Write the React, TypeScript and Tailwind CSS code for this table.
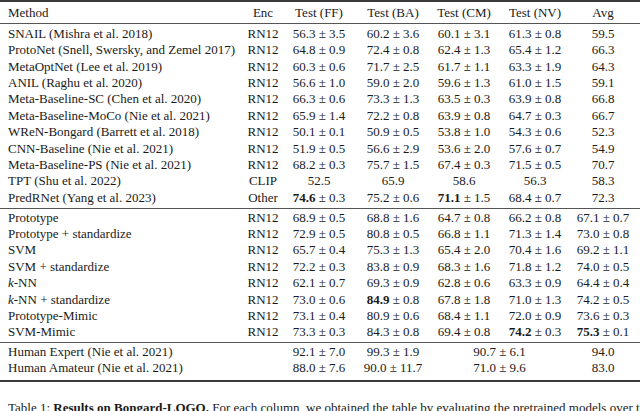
import React from "react";

type Cell = { v: string; e?: string; b?: boolean };

interface Row {
  method: React.ReactNode;
  enc: string;
  cells: Cell[];
  human?: boolean;
}

const c = (s: string, b = false): Cell => {
  const [v, e] = s.split("|");
  return { v, e, b };
};

const kNN = (
  <>
    <span className="italic">k</span>-NN
  </>
);

const baselines: Row[] = [
  { method: "SNAIL (Mishra et al. 2018)", enc: "RN12", cells: [c("56.3|3.5"), c("60.2|3.6"), c("60.1|3.1"), c("61.3|0.8"), c("59.5")] },
  { method: "ProtoNet (Snell, Swersky, and Zemel 2017)", enc: "RN12", cells: [c("64.8|0.9"), c("72.4|0.8"), c("62.4|1.3"), c("65.4|1.2"), c("66.3")] },
  { method: "MetaOptNet (Lee et al. 2019)", enc: "RN12", cells: [c("60.3|0.6"), c("71.7|2.5"), c("61.7|1.1"), c("63.3|1.9"), c("64.3")] },
  { method: "ANIL (Raghu et al. 2020)", enc: "RN12", cells: [c("56.6|1.0"), c("59.0|2.0"), c("59.6|1.3"), c("61.0|1.5"), c("59.1")] },
  { method: "Meta-Baseline-SC (Chen et al. 2020)", enc: "RN12", cells: [c("66.3|0.6"), c("73.3|1.3"), c("63.5|0.3"), c("63.9|0.8"), c("66.8")] },
  { method: "Meta-Baseline-MoCo (Nie et al. 2021)", enc: "RN12", cells: [c("65.9|1.4"), c("72.2|0.8"), c("63.9|0.8"), c("64.7|0.3"), c("66.7")] },
  { method: "WReN-Bongard (Barrett et al. 2018)", enc: "RN12", cells: [c("50.1|0.1"), c("50.9|0.5"), c("53.8|1.0"), c("54.3|0.6"), c("52.3")] },
  { method: "CNN-Baseline (Nie et al. 2021)", enc: "RN12", cells: [c("51.9|0.5"), c("56.6|2.9"), c("53.6|2.0"), c("57.6|0.7"), c("54.9")] },
  { method: "Meta-Baseline-PS (Nie et al. 2021)", enc: "RN12", cells: [c("68.2|0.3"), c("75.7|1.5"), c("67.4|0.3"), c("71.5|0.5"), c("70.7")] },
  { method: "TPT (Shu et al. 2022)", enc: "CLIP", cells: [c("52.5"), c("65.9"), c("58.6"), c("56.3"), c("58.3")] },
  { method: "PredRNet (Yang et al. 2023)", enc: "Other", cells: [c("74.6|0.3", true), c("75.2|0.6"), c("71.1|1.5", true), c("68.4|0.7"), c("72.3")] },
];

const ours: Row[] = [
  { method: "Prototype", enc: "RN12", cells: [c("68.9|0.5"), c("68.8|1.6"), c("64.7|0.8"), c("66.2|0.8"), c("67.1|0.7")] },
  { method: "Prototype + standardize", enc: "RN12", cells: [c("72.9|0.5"), c("80.8|0.5"), c("66.8|1.1"), c("71.3|1.4"), c("73.0|0.8")] },
  { method: "SVM", enc: "RN12", cells: [c("65.7|0.4"), c("75.3|1.3"), c("65.4|2.0"), c("70.4|1.6"), c("69.2|1.1")] },
  { method: "SVM + standardize", enc: "RN12", cells: [c("72.2|0.3"), c("83.8|0.9"), c("68.3|1.6"), c("71.8|1.2"), c("74.0|0.5")] },
  { method: kNN, enc: "RN12", cells: [c("62.1|0.7"), c("69.3|0.9"), c("62.8|0.6"), c("63.3|0.9"), c("64.4|0.4")] },
  { method: <>{kNN} + standardize</>, enc: "RN12", cells: [c("73.0|0.6"), c("84.9|0.8", true), c("67.8|1.8"), c("71.0|1.3"), c("74.2|0.5")] },
  { method: "Prototype-Mimic", enc: "RN12", cells: [c("73.1|0.4"), c("80.9|0.6"), c("68.4|1.1"), c("72.0|0.9"), c("73.6|0.3")] },
  { method: "SVM-Mimic", enc: "RN12", cells: [c("73.3|0.3"), c("84.3|0.8"), c("69.4|0.8"), c("74.2|0.3", true), c("75.3|0.1", true)] },
];

// human rows: FF, BA, CM+NV merged, Avg
const humans: Row[] = [
  { method: "Human Expert (Nie et al. 2021)", enc: "", human: true, cells: [c("92.1|7.0"), c("99.3|1.9"), c("90.7|6.1"), c("94.0")] },
  { method: "Human Amateur (Nie et al. 2021)", enc: "", human: true, cells: [c("88.0|7.6"), c("90.0|11.7"), c("71.0|9.6"), c("83.0")] },
];

const colCls = [
  "ml-[4px] w-[56px]",
  "ml-[16px] w-[60px]",
  "ml-[11px] w-[60px]",
  "ml-[11px] w-[60px]",
  "ml-[10px] w-[56px]",
];

const humanCls = [
  "ml-[4px] w-[56px]",
  "ml-[16px] w-[60px]",
  "ml-[11px] w-[131px]",
  "ml-[10px] w-[56px]",
];

function Value({ cell }: { cell: Cell }) {
  return (
    <span>
      {cell.b ? <span className="font-bold">{cell.v}</span> : cell.v}
      {cell.e && <> ± {cell.e}</>}
    </span>
  );
}

function TableRow({ row }: { row: Row }) {
  const cls = row.human ? humanCls : colCls;
  return (
    <div className="flex h-[16.4px] items-center">
      <div className="w-[239px] pl-2">{row.method}</div>
      <div className="flex w-[48px] justify-center">{row.enc}</div>
      {row.cells.map((cell, i) => (
        <div key={i} className={`flex justify-center ${cls[i]}`}>
          <Value cell={cell} />
        </div>
      ))}
    </div>
  );
}

export default function App() {
  const headers = ["Test (FF)", "Test (BA)", "Test (CM)", "Test (NV)", "Avg"];
  return (
    <div
      className="h-[411px] w-[640px] overflow-hidden whitespace-nowrap bg-white text-[13px] leading-[16.4px] text-[#1a1a1a]"
      style={{ fontFamily: '"Liberation Serif", "Times New Roman", serif' }}
    >
      <div className="h-[2px] bg-[#3a3a3a]" />

      {/* Header */}
      <div className="flex h-[16.4px] items-center mt-[3px] mb-[2px]">
        <div className="w-[239px] pl-2">Method</div>
        <div className="flex w-[48px] justify-center">Enc</div>
        {headers.map((h, i) => (
          <div key={h} className={`flex justify-center ${colCls[i]}`}>
            {h}
          </div>
        ))}
      </div>
      <div className="h-px bg-[#555]" />

      <div className="pt-[1.5px] pb-[1.5px]">
        {baselines.map((r, i) => (
          <TableRow key={i} row={r} />
        ))}
      </div>
      <div className="h-px bg-[#555]" />

      <div className="pt-[1px] pb-[1px]">
        {ours.map((r, i) => (
          <TableRow key={i} row={r} />
        ))}
      </div>
      <div className="h-px bg-[#555]" />

      <div className="pt-[1px] pb-[3px]">
        {humans.map((r, i) => (
          <TableRow key={i} row={r} />
        ))}
      </div>
      <div className="h-[2px] bg-[#3a3a3a]" />

      {/* Caption */}
      <p className="mt-[18px] pl-2">
        Table 1: <span className="font-bold">Results on Bongard-LOGO.</span> For each column, we obtained
        the table by evaluating the pretrained models over the optimal test settings.
      </p>
    </div>
  );
}
